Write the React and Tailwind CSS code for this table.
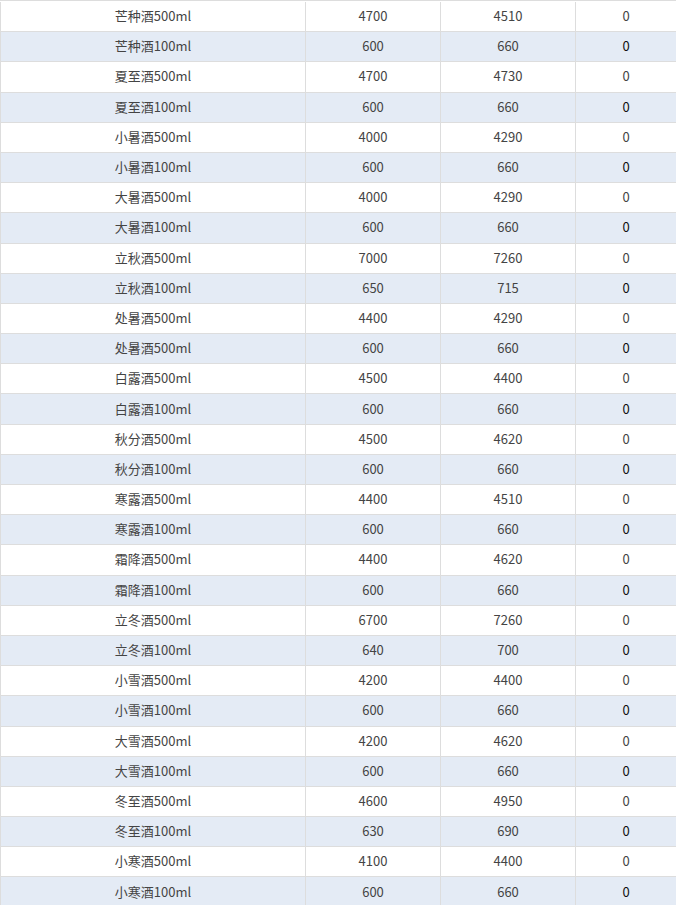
import React from "react";

const rows = [
  ["芒种酒500ml", "4700", "4510", "0"],
  ["芒种酒100ml", "600", "660", "0"],
  ["夏至酒500ml", "4700", "4730", "0"],
  ["夏至酒100ml", "600", "660", "0"],
  ["小暑酒500ml", "4000", "4290", "0"],
  ["小暑酒100ml", "600", "660", "0"],
  ["大暑酒500ml", "4000", "4290", "0"],
  ["大暑酒100ml", "600", "660", "0"],
  ["立秋酒500ml", "7000", "7260", "0"],
  ["立秋酒100ml", "650", "715", "0"],
  ["处暑酒500ml", "4400", "4290", "0"],
  ["处暑酒500ml", "600", "660", "0"],
  ["白露酒500ml", "4500", "4400", "0"],
  ["白露酒100ml", "600", "660", "0"],
  ["秋分酒500ml", "4500", "4620", "0"],
  ["秋分酒100ml", "600", "660", "0"],
  ["寒露酒500ml", "4400", "4510", "0"],
  ["寒露酒100ml", "600", "660", "0"],
  ["霜降酒500ml", "4400", "4620", "0"],
  ["霜降酒100ml", "600", "660", "0"],
  ["立冬酒500ml", "6700", "7260", "0"],
  ["立冬酒100ml", "640", "700", "0"],
  ["小雪酒500ml", "4200", "4400", "0"],
  ["小雪酒100ml", "600", "660", "0"],
  ["大雪酒500ml", "4200", "4620", "0"],
  ["大雪酒100ml", "600", "660", "0"],
  ["冬至酒500ml", "4600", "4950", "0"],
  ["冬至酒100ml", "630", "690", "0"],
  ["小寒酒500ml", "4100", "4400", "0"],
  ["小寒酒100ml", "600", "660", "0"],
];

export default function App() {
  return (
    <div
      className="w-[676px] h-[905px] overflow-hidden bg-white border-t border-[#dddddd] pt-px text-[13px] text-[#444]"
      style={{ fontFamily: '"Noto Sans CJK SC", "Noto Sans", sans-serif' }}
    >
      {rows.map((r, i) => (
        <div
          key={i}
          className={`grid grid-cols-[305px_135px_135px_1fr] h-[30.2px] border-b border-[#dddddd] ${
            i % 2 === 1 ? "bg-[#e4ebf5]" : "bg-white"
          }`}
        >
          {r.map((c, j) => (
            <div
              key={j}
              className={`flex items-center justify-center border-l border-[#dddddd] leading-none pb-[2px] ${
                j === 3 && i % 2 === 1 ? "text-[#111]" : ""
              }`}
            >
              {c}
            </div>
          ))}
        </div>
      ))}
    </div>
  );
}
